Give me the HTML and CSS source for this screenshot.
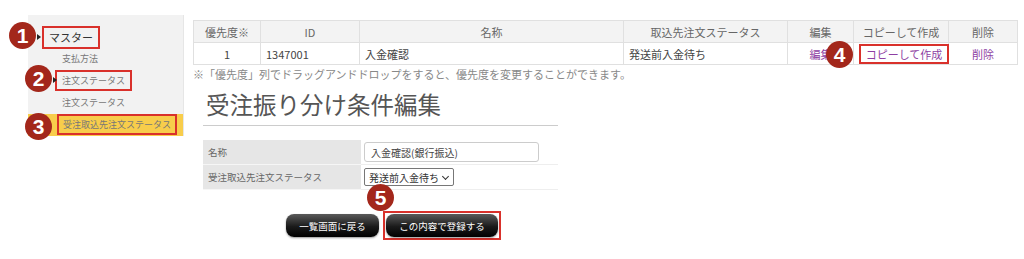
FILE: index.html
```html
<!DOCTYPE html>
<html lang="ja">
<head>
    <meta charset="UTF-8">
    <title>受注振り分け条件編集</title>
    <link rel="stylesheet" href="styles.css">
</head>
<body>

    <div class="page">
        <!-- サイドメニュー -->
        <aside class="sidebar">
            <div class="menu-title">
                <span class="mark mark-1">1</span>
                <span class="hl">マスター</span>
            </div>
            <ul class="menu">
                <li>支払方法</li>
                <li><span class="mark mark-2">2</span><span class="hl">注文ステータス</span></li>
                <li>注文ステータス</li>
                <li class="current"><span class="mark mark-3">3</span><span class="hl">受注取込先注文ステータス</span></li>
            </ul>
        </aside>

        <main class="content">
            <table class="list">
                <colgroup>
                    <col style="width:67px"><col style="width:99px"><col style="width:264px"><col style="width:164px"><col style="width:66px"><col style="width:95px"><col style="width:69px">
                </colgroup>
                <thead>
                    <tr>
                        <th>優先度※</th>
                        <th>ID</th>
                        <th>名称</th>
                        <th>取込先注文ステータス</th>
                        <th>編集</th>
                        <th>コピーして作成</th>
                        <th>削除</th>
                    </tr>
                </thead>
                <tbody>
                    <tr>
                        <td class="center">1</td>
                        <td>1347001</td>
                        <td>入金確認</td>
                        <td>発送前入金待ち</td>
                        <td class="center"><a href="#">編集</a></td>
                        <td class="center copy-cell"><span class="mark mark-4">4</span><a href="#" class="hl">コピーして作成</a></td>
                        <td class="center"><a href="#">削除</a></td>
                    </tr>
                </tbody>
            </table>
            <p class="note">※「優先度」列でドラッグアンドドロップをすると、優先度を変更することができます。</p>

            <h2>受注振り分け条件編集</h2>

            <table class="form">
                <tr>
                    <th>名称</th>
                    <td><input type="text" value="入金確認(銀行振込)"></td>
                </tr>
                <tr>
                    <th>受注取込先注文ステータス</th>
                    <td>
                        <span class="select">発送前入金待ち <span class="chev"></span></span>
                    </td>
                </tr>
            </table>

            <div class="buttons">
                <span class="mark mark-5">5</span>
                <button class="btn-back">一覧画面に戻る</button>
                <span class="hl hl-btn"><button class="btn-submit">この内容で登録する</button></span>
            </div>
        </main>
    </div>

</body>
</html>
```

FILE: styles.css
```css
body {
    margin: 0;
    font-family: "Noto Sans CJK JP", "Liberation Sans", sans-serif;
    color: #555;
    background: #fff;
}

.page {
    display: flex;
    align-items: flex-start;
}

/* sidebar */
.sidebar {
    width: 155px;
    margin: 15px 0 0 28px;
    background: #f2f2f2;
    border-right: 1px solid #e6e6e6;
}

.menu-title {
    position: relative;
    height: 23px;
    margin-top: 8px;
    padding-left: 14px;
}

.menu-title .hl {
    display: inline-block;
    height: 19px;
    line-height: 19px;
    padding: 0 5px;
    font-size: 11px;
    color: #333;
}

.hl {
    border: 2px solid #d9312b;
}

.menu {
    list-style: none;
    margin: 2px 0 0;
    padding: 0;
}

.menu li {
    position: relative;
    height: 22px;
    line-height: 22px;
    padding-left: 34px;
    font-size: 9px;
    color: #777;
    white-space: nowrap;
}

.menu li .hl {
    display: inline-block;
    height: 17px;
    line-height: 17px;
    margin-left: -7px;
    padding: 0 5px;
    vertical-align: middle;
    margin-top: -2px;
}

.menu li.current {
    background: #f8cd4b;
    padding-left: 29px;
}

.menu li.current .hl {
    margin-left: 0;
    padding: 0 4px;
}

/* numbered marks */
.mark {
    position: absolute;
    width: 27px;
    height: 27px;
    border-radius: 50%;
    background: #a3271b;
    color: #fff;
    font-family: "Liberation Sans", sans-serif;
    font-weight: bold;
    font-size: 21px;
    line-height: 27px;
    text-align: center;
    z-index: 2;
}

.mark-1 { left: -19px; top: -1px; }
.mark-2 { left: -3px; top: -5px; }
.mark-3 { left: -3px; top: -1px; }
.mark-4 { left: -28px; top: -2px; }
.mark-5 { left: 81px; top: -27px; }

.mark-1::after,
.mark-2::after {
    content: "";
    position: absolute;
    right: -5px;
    top: 12px;
    border-left: 4px solid #222;
    border-top: 3px solid transparent;
    border-bottom: 3px solid transparent;
}

/* main content */
.content {
    margin: 20px 0 0 9px;
    width: 824px;
}

.list {
    width: 824px;
    border-collapse: collapse;
    table-layout: fixed;
    font-size: 11px;
}

.list th,
.list td {
    height: 21px;
    padding: 0 5px;
    border: 1px solid #e0e0e0;
    text-align: left;
    font-weight: normal;
    white-space: nowrap;
    overflow: visible;
}

.list th {
    background: #f3f3f3;
    text-align: center;
    color: #666;
}

.list td {
    color: #444;
}

.list .center {
    text-align: center;
}

.list a {
    color: #8e3fa3;
    text-decoration: none;
}

.copy-cell {
    position: relative;
}

.copy-cell .hl {
    display: inline-block;
    width: 86px;
    height: 16px;
    line-height: 16px;
}

.note {
    margin: 1px 0 0;
    font-size: 11px;
    color: #888;
    white-space: nowrap;
}

h2 {
    width: 352px;
    margin: 7px 0 0 10px;
    padding: 0 0 0 3px;
    height: 36px;
    line-height: 30px;
    font-size: 23.5px;
    font-weight: normal;
    color: #555;
    border-bottom: 1px solid #ccc;
}

.form {
    width: 355px;
    margin: 14px 0 0 10px;
    border-collapse: collapse;
    font-size: 9.5px;
}

.form th {
    width: 148px;
    background: #e6e6e6;
    text-align: left;
    font-weight: normal;
    color: #666;
    padding: 0 5px;
    height: 24px;
    border-bottom: 1px solid #f6f6f6;
    white-space: nowrap;
}

.form td {
    padding: 2px 3px;
    border-bottom: 1px solid #eee;
}

.form input {
    width: 175px;
    height: 20px;
    box-sizing: border-box;
    padding: 0 6px;
    border: 1px solid #ccc;
    border-radius: 3px;
    font-family: inherit;
    font-size: 10px;
    color: #444;
}

.select {
    display: inline-block;
    height: 18px;
    line-height: 17px;
    padding: 0 4px;
    border: 1px solid #777;
    border-radius: 2px;
    font-size: 10px;
    color: #333;
    box-sizing: border-box;
    white-space: nowrap;
}

.chev {
    display: inline-block;
    width: 4px;
    height: 4px;
    border-right: 1.5px solid #333;
    border-bottom: 1.5px solid #333;
    transform: rotate(45deg);
    margin: 0 1px 3px 2px;
}

.buttons {
    position: relative;
    display: flex;
    align-items: center;
    gap: 4px;
    margin: 21px 0 0 93px;
}

.buttons button {
    height: 23px;
    padding: 0;
    border: none;
    border-radius: 8px;
    background: linear-gradient(#5a5a5a, #1a1a1a 55%, #000);
    box-shadow: 0 1px 2px rgba(0, 0, 0, 0.4);
    color: #fff;
    font-family: inherit;
    font-size: 9.5px;
    white-space: nowrap;
    cursor: pointer;
}

.btn-back {
    width: 93px;
}

.hl-btn {
    display: inline-block;
    padding: 1px;
    line-height: 0;
}

.btn-submit {
    width: 112px;
}
```
